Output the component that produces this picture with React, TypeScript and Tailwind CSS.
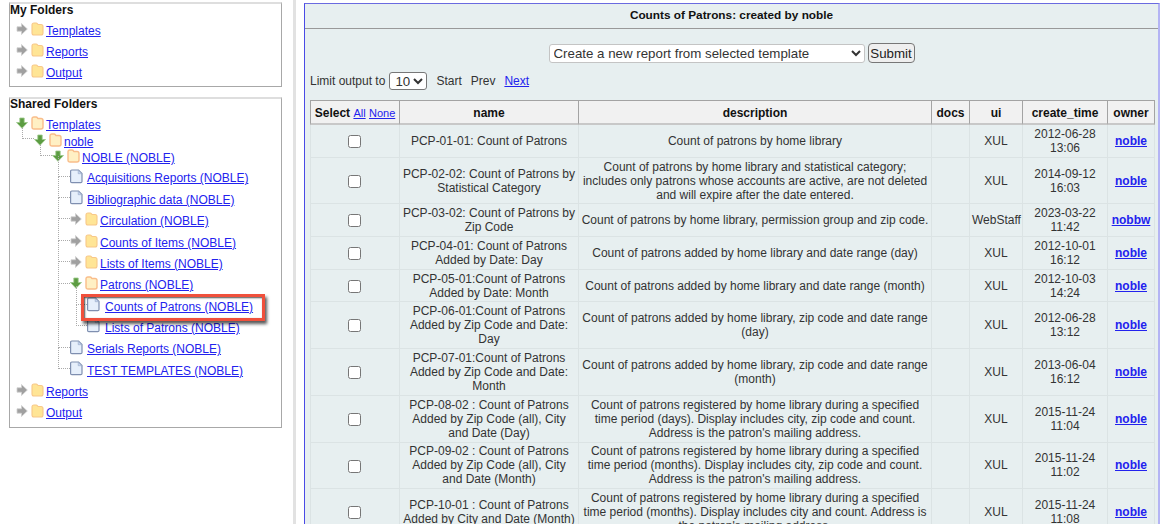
import React from "react";

const Arrow = ({ down }: { down?: boolean }) => (
  <svg width="12" height="12" viewBox="0 0 12 12" className="shrink-0">
    {down ? (
      <path d="M3.800 1h4.400v4.500h3.300L6 11.300 0.500 5.500h3.300z" fill="#5c9c42" stroke="#9cc98a" strokeWidth="0.8" strokeLinejoin="round" />
    ) : (
      <path d="M1 3.800h4.500V0.500L11.300 6l-5.800 5.500V8.200H1z" fill="#a0a0a0" stroke="#cfcfcf" strokeWidth="0.8" strokeLinejoin="round" />
    )}
  </svg>
);

const Folder = ({ open }: { open?: boolean }) => (
  <svg width="13" height="14" viewBox="0 0 13 14" className="shrink-0">
    <path
      d="M1 3Q1 1 3 1H5Q6 1 6.500 2L7 2.500H10Q12 2.500 12 4.500V11Q12 13 10 13H3Q1 13 1 11z"
      fill={open ? "#fff0c4" : "#ffe596"}
      stroke={open ? "#f9bd8a" : "#f8c888"}
      strokeWidth={open ? 1.400 : 1.100}
    />
  </svg>
);

const Doc = () => (
  <svg width="13" height="15" viewBox="0 0 13 15" className="shrink-0">
    <path d="M1.800 1h6.700L12 4.500V12.500a1.200 1.200 0 0 1-1.200 1.200H1.800a1.200 1.200 0 0 1-1.200-1.200V2.200a1.200 1.200 0 0 1 1.200-1.200z" fill="#e6effb" stroke="#7f8fb0" strokeWidth="1.200" />
    <path d="M8.200 1.200v3.500h3.600z" fill="#c4d4ee" stroke="#9babc8" strokeWidth="0.6" />
  </svg>
);

type RowProps = {
  pad: string;
  kind: "closed" | "open" | "doc";
  label: string;
  gap?: string;
  elbow?: string;
  rowH?: string;
};

const TreeRow = ({ pad, kind, label, elbow, gap = "ml-[2px]", rowH = "h-[21.35px]" }: RowProps) => (
  <div className={`relative flex items-center ${rowH} ${pad}`}>
    {elbow && <span className={`absolute border-l border-b border-dotted border-[#aaa] ${elbow}`} />}
    {kind === "doc" ? (
      <Doc />
    ) : (
      <>
        <Arrow down={kind === "open"} />
        <span className="ml-[3px] flex">
          <Folder open={kind === "open"} />
        </span>
      </>
    )}
    <a className={`${gap} text-[#2222ee] underline whitespace-nowrap mt-[4px]`}>{label}</a>
  </div>
);

const rows = [
  ["PCP-01-01: Count of Patrons", "Count of patrons by home library", "XUL", "2012-06-28 13:06", "noble"],
  ["PCP-02-02: Count of Patrons by Statistical Category", "Count of patrons by home library and statistical category; includes only patrons whose accounts are active, are not deleted and will expire after the date entered.", "XUL", "2014-09-12 16:03", "noble"],
  ["PCP-03-02: Count of Patrons by Zip Code", "Count of patrons by home library, permission group and zip code.", "WebStaff", "2023-03-22 11:42", "nobbw"],
  ["PCP-04-01: Count of Patrons Added by Date: Day", "Count of patrons added by home library and date range (day)", "XUL", "2012-10-01 16:12", "noble"],
  ["PCP-05-01:Count of Patrons Added by Date: Month", "Count of patrons added by home library and date range (month)", "XUL", "2012-10-03 14:24", "noble"],
  ["PCP-06-01:Count of Patrons Added by Zip Code and Date: Day", "Count of patrons added by home library, zip code and date range (day)", "XUL", "2012-06-28 13:12", "noble"],
  ["PCP-07-01:Count of Patrons Added by Zip Code and Date: Month", "Count of patrons added by home library, zip code and date range (month)", "XUL", "2013-06-04 16:12", "noble"],
  ["PCP-08-02 : Count of Patrons Added by Zip Code (all), City and Date (Day)", "Count of patrons registered by home library during a specified time period (days). Display includes city, zip code and count. Address is the patron's mailing address.", "XUL", "2015-11-24 11:04", "noble"],
  ["PCP-09-02 : Count of Patrons Added by Zip Code (all), City and Date (Month)", "Count of patrons registered by home library during a specified time period (months). Display includes city, zip code and count. Address is the patron's mailing address.", "XUL", "2015-11-24 11:02", "noble"],
  ["PCP-10-01 : Count of Patrons Added by City and Date (Month)", "Count of patrons registered by home library during a specified time period (months). Display includes city and count. Address is the patron's mailing address.", "XUL", "2015-11-24 11:08", "noble"],
];

const th = "border-t border-r first:border-l border-[#a3a3a3] border-b-2 border-b-[#c8c8c8] bg-[#f1f1f1] font-bold text-[#111] text-center h-[25px] p-0 pt-[1px] text-[12px]";
const td = "border-b border-r first:border-l first:pr-[3px] border-[#dbe3e4] text-center px-[2px] py-[1.850px] leading-[14px] text-[#333]";

export default function App() {
  return (
    <div className="flex h-[524px] w-[1170px] overflow-hidden bg-white font-['Liberation_Sans',Arial,sans-serif] text-[12px]">
      <aside className="w-[296px] shrink-0 border-r-[3px] border-[#e2e2e2] pl-[9px] pr-[11px] pt-[2px]">
        <section className="h-[85px] border border-[#a8a8a8] border-t-[2px] border-t-[#dedede]">
          <h3 className="font-bold text-[12px] text-[#111] leading-[14px] mt-[-1px] mb-[1px]">My Folders</h3>
          <TreeRow pad="pl-[6px]" kind="closed" label="Templates" />
          <TreeRow pad="pl-[6px]" kind="closed" label="Reports" />
          <TreeRow pad="pl-[6px]" kind="closed" label="Output" />
        </section>
        <section className="relative mt-[10px] h-[331px] border border-[#a8a8a8] border-t-[2px] border-t-[#dedede]">
          <h3 className="font-bold text-[12px] text-[#111] leading-[14px] mt-[-2px] mb-[4px]">Shared Folders</h3>
          <TreeRow pad="pl-[6px]" kind="open" label="Templates" rowH="h-[16.3px]" />
          <TreeRow pad="pl-[24px]" kind="open" label="noble" rowH="h-[16.500px]" elbow="left-[12px] w-[12px] top-[-3px] h-[11px]" />
          <TreeRow pad="pl-[42px]" kind="open" label="NOBLE (NOBLE)" rowH="h-[16.500px]" elbow="left-[30px] w-[12px] top-[-3px] h-[11px]" />
          <div className="h-[1.500px]" />
          <TreeRow pad="pl-[60px]" kind="doc" label="Acquisitions Reports (NOBLE)" gap="ml-[4px]" elbow="left-[48px] w-[12px] top-[-10px] h-[21px]" />
          <TreeRow pad="pl-[60px]" kind="doc" label="Bibliographic data (NOBLE)" gap="ml-[4px]" elbow="left-[48px] w-[12px] top-[-10px] h-[21px]" />
          <TreeRow pad="pl-[60px]" kind="closed" label="Circulation (NOBLE)" elbow="left-[48px] w-[12px] top-[-10px] h-[21px]" />
          <TreeRow pad="pl-[60px]" kind="closed" label="Counts of Items (NOBLE)" elbow="left-[48px] w-[12px] top-[-10px] h-[21px]" />
          <TreeRow pad="pl-[60px]" kind="closed" label="Lists of Items (NOBLE)" elbow="left-[48px] w-[12px] top-[-10px] h-[21px]" />
          <TreeRow pad="pl-[60px]" kind="open" label="Patrons (NOBLE)" elbow="left-[48px] w-[12px] top-[-10px] h-[21px]" />
          <TreeRow pad="pl-[77px]" kind="doc" label="Counts of Patrons (NOBLE)" gap="ml-[5px]" elbow="left-[66px] w-[11px] top-[-8px] h-[19px]" />
          <TreeRow pad="pl-[77px]" kind="doc" label="Lists of Patrons (NOBLE)" gap="ml-[5px]" elbow="left-[66px] w-[11px] top-[-10px] h-[21px]" />
          <TreeRow pad="pl-[60px]" kind="doc" label="Serials Reports (NOBLE)" gap="ml-[4px]" elbow="left-[48px] w-[12px] top-[-52px] h-[63px]" />
          <TreeRow pad="pl-[60px]" kind="doc" label="TEST TEMPLATES (NOBLE)" gap="ml-[4px]" elbow="left-[48px] w-[12px] top-[-10px] h-[21px]" />
          <TreeRow pad="pl-[6px]" kind="closed" label="Reports" />
          <TreeRow pad="pl-[6px]" kind="closed" label="Output" />
          <div className="absolute left-[71px] top-[195px] h-[27px] w-[184px] border-[3px] border-[#f0503c] shadow-[2px_3px_3px_rgba(0,0,0,0.65),inset_1px_1px_2px_rgba(0,0,0,0.7)]" />
        </section>
      </aside>
      <main className="ml-[8px] mt-[3px] w-[856px] shrink-0 self-start h-[530px] border-l border-l-[#4a4ae6] border-r-[2px] border-r-[#b4b4f4] border-t border-t-[#6a6ae0] bg-[#e7eff0] text-[12px]">
        <div className="h-[25px] flex items-center justify-center border-b border-[#999] text-[#111] font-bold text-[11.800px]">
          Counts of Patrons: created by noble
        </div>
        <div className="flex justify-center items-center gap-[3px] mt-[14px] h-[20px]">
          <select className="w-[316px] h-[19px] bg-white border border-[#c4c4c4] rounded-[3px] text-[13.300px] text-[#333]">
            <option>Create a new report from selected template</option>
          </select>
          <button className="w-[47px] h-[20px] bg-[#efefef] border border-[#777] rounded-[4px] text-[13.300px] text-[#222]">Submit</button>
        </div>
        <div className="flex items-center mt-[8px] h-[20px] pl-[5px] text-[#333]">
          <span>Limit output to</span>
          <select className="ml-[4px] w-[38px] h-[18px] bg-white border border-[#777] rounded-[3px] text-[13.300px] pl-[1px] text-[#333]">
            <option>10</option>
          </select>
          <span className="ml-[9px]">Start</span>
          <span className="ml-[9px]">Prev</span>
          <a className="ml-[9px] text-[#2222ee] underline">Next</a>
        </div>
        <table className="mt-[9px] ml-[5px] w-[845px] table-fixed border-separate border-spacing-0">
          <colgroup>
            <col className="w-[90px]" />
            <col className="w-[179px]" />
            <col className="w-[353px]" />
            <col className="w-[38px]" />
            <col className="w-[53px]" />
            <col className="w-[85px]" />
            <col className="w-[47px]" />
          </colgroup>
          <thead>
            <tr>
              <th className={th}>
                Select <a className="text-[#2222ee] underline font-normal text-[11px]">All</a>{" "}
                <a className="text-[#2222ee] underline font-normal text-[11px]">None</a>
              </th>
              <th className={th}>name</th>
              <th className={th}>description</th>
              <th className={th}>docs</th>
              <th className={th}>ui</th>
              <th className={th}>create_time</th>
              <th className={th}>owner</th>
            </tr>
          </thead>
          <tbody>
            {rows.map((r) => (
              <tr key={r[0]}>
                <td className={td}>
                  <input type="checkbox" className="align-middle" />
                </td>
                <td className={td}>{r[0]}</td>
                <td className={td}>{r[1]}</td>
                <td className={td}></td>
                <td className={td}>{r[2]}</td>
                <td className={td}>{r[3]}</td>
                <td className={td}>
                  <a className="text-[#2222ee] underline font-bold">{r[4]}</a>
                </td>
              </tr>
            ))}
          </tbody>
        </table>
      </main>
    </div>
  );
}
